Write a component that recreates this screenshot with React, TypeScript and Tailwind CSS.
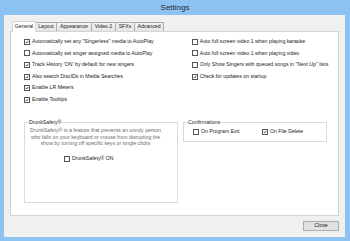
import type { ReactNode } from 'react'

const font = { fontFamily: '"Liberation Sans", Arial, sans-serif' }

function Check({ on }: { on?: boolean }) {
  return (
    <span className="w-[6px] h-[6px] border border-[#555] bg-white flex items-center justify-center shrink-0">
      {on && (
        <svg viewBox="0 0 6 6" className="w-[6px] h-[6px]">
          <path d="M1.2 3.1 L2.5 4.5 L4.9 1.3" stroke="#111" strokeWidth="1.1" fill="none" />
        </svg>
      )}
    </span>
  )
}

function Opt({ label, on }: { label: string; on?: boolean }) {
  return (
    <div className="h-[11.65px] flex items-center gap-[2px] whitespace-nowrap">
      <Check on={on} />
      <span>{label}</span>
    </div>
  )
}

function Group({ title, className, children }: { title: string; className: string; children: ReactNode }) {
  return (
    <fieldset className={`border border-[#dcdcdc] ${className}`}>
      <legend className="ml-[4px] leading-[7px] text-[#222]">{title}</legend>
      {children}
    </fieldset>
  )
}

const tabs = [
  { name: 'General', w: 'w-[24px]' },
  { name: 'Layout', w: 'w-[22px]' },
  { name: 'Appearance', w: 'w-[36px]' },
  { name: 'Video 2', w: 'w-[25px]' },
  { name: 'SFXs', w: 'w-[20px]' },
  { name: 'Advanced', w: 'w-[30px]' },
]

export default function App() {
  return (
    <div className="w-[350px] h-[241px] bg-[#8dc3f2] flex flex-col text-[5.2px] text-[#1a1a1a]" style={font}>
      {/* Заголовок окна */}
      <div className="h-[15px] flex items-center justify-center text-[8px] text-[#2a2a2a]">Settings</div>

      <div className="flex-1 ml-[4px] mr-[5px] mb-[4px] bg-[#f0f0f0] flex flex-col">
        {/* Вкладки */}
        <div className="h-[16px] pl-[8px] pt-[5px] flex items-end">
          {tabs.map((t, i) =>
            i === 0 ? (
              <div
                key={t.name}
                className={`${t.w} h-[11px] bg-white border border-b-0 border-[#d4d4d4] flex items-center justify-center relative z-10 -mb-px pb-px`}
              >
                {t.name}
              </div>
            ) : (
              <div
                key={t.name}
                className={`${t.w} h-[9px] bg-gradient-to-b from-[#f3f3f3] to-[#e5e5e5] border border-b-0 border-[#acacac] -ml-px flex items-center justify-center`}
              >
                {t.name}
              </div>
            ),
          )}
        </div>

        {/* Панель */}
        <div className="ml-[6px] w-[329px] h-[185px] bg-white border border-[#d4d4d4] pl-[13px] pt-[4px]">
          <div className="flex">
            <div className="w-[167.7px]">
              <Opt on label={'Automatically set any "Singerless" media to AutoPlay'} />
              <Opt label="Automatically set singer assigned media to AutoPlay" />
              <Opt on label="Track History 'ON' by default for new singers" />
              <Opt on label="Also search DiscIDs in Media Searches" />
              <Opt on label="Enable LR Meters" />
              <Opt on label="Enable Tooltips" />
            </div>
            <div>
              <Opt label="Auto full screen video 1 when playing karaoke" />
              <Opt label="Auto full screen video 1 when playing video" />
              <Opt label={'Only Show Singers with queued songs in "Next Up" lists'} />
              <Opt on label="Check for updates on startup" />
            </div>
          </div>

          <div className="flex gap-[5px] mt-[13.5px] items-start">
            <Group title="DrunkSafety®" className="w-[154px] h-[84px]">
              <p className="ml-[4px] w-[133px] text-center text-[#6d6d6d] leading-[6.5px] mt-[1px] whitespace-nowrap">
                DrunkSafety® is a feature that prevents an unruly person
                <br />
                who falls on your keyboard or mouse from disrupting the
                <br />
                show by turning off specific keys or single clicks
              </p>
              <div className="ml-[39px] mt-[6px]">
                <Opt label="DrunkSafety® ON" />
              </div>
            </Group>
            <Group title="Confirmations" className="w-[144px] h-[23px]">
              <div className="flex pl-[9px]">
                <div className="w-[69px]">
                  <Opt label="On Program Exit" />
                </div>
                <Opt on label="On File Delete" />
              </div>
            </Group>
          </div>
        </div>

        {/* Кнопка */}
        <div className="flex justify-end pr-[6px] mt-[5px]">
          <button className="w-[36px] h-[10px] border border-[#adadad] bg-[#e1e1e1] flex items-center justify-center leading-none">
            Close
          </button>
        </div>
      </div>
    </div>
  )
}
